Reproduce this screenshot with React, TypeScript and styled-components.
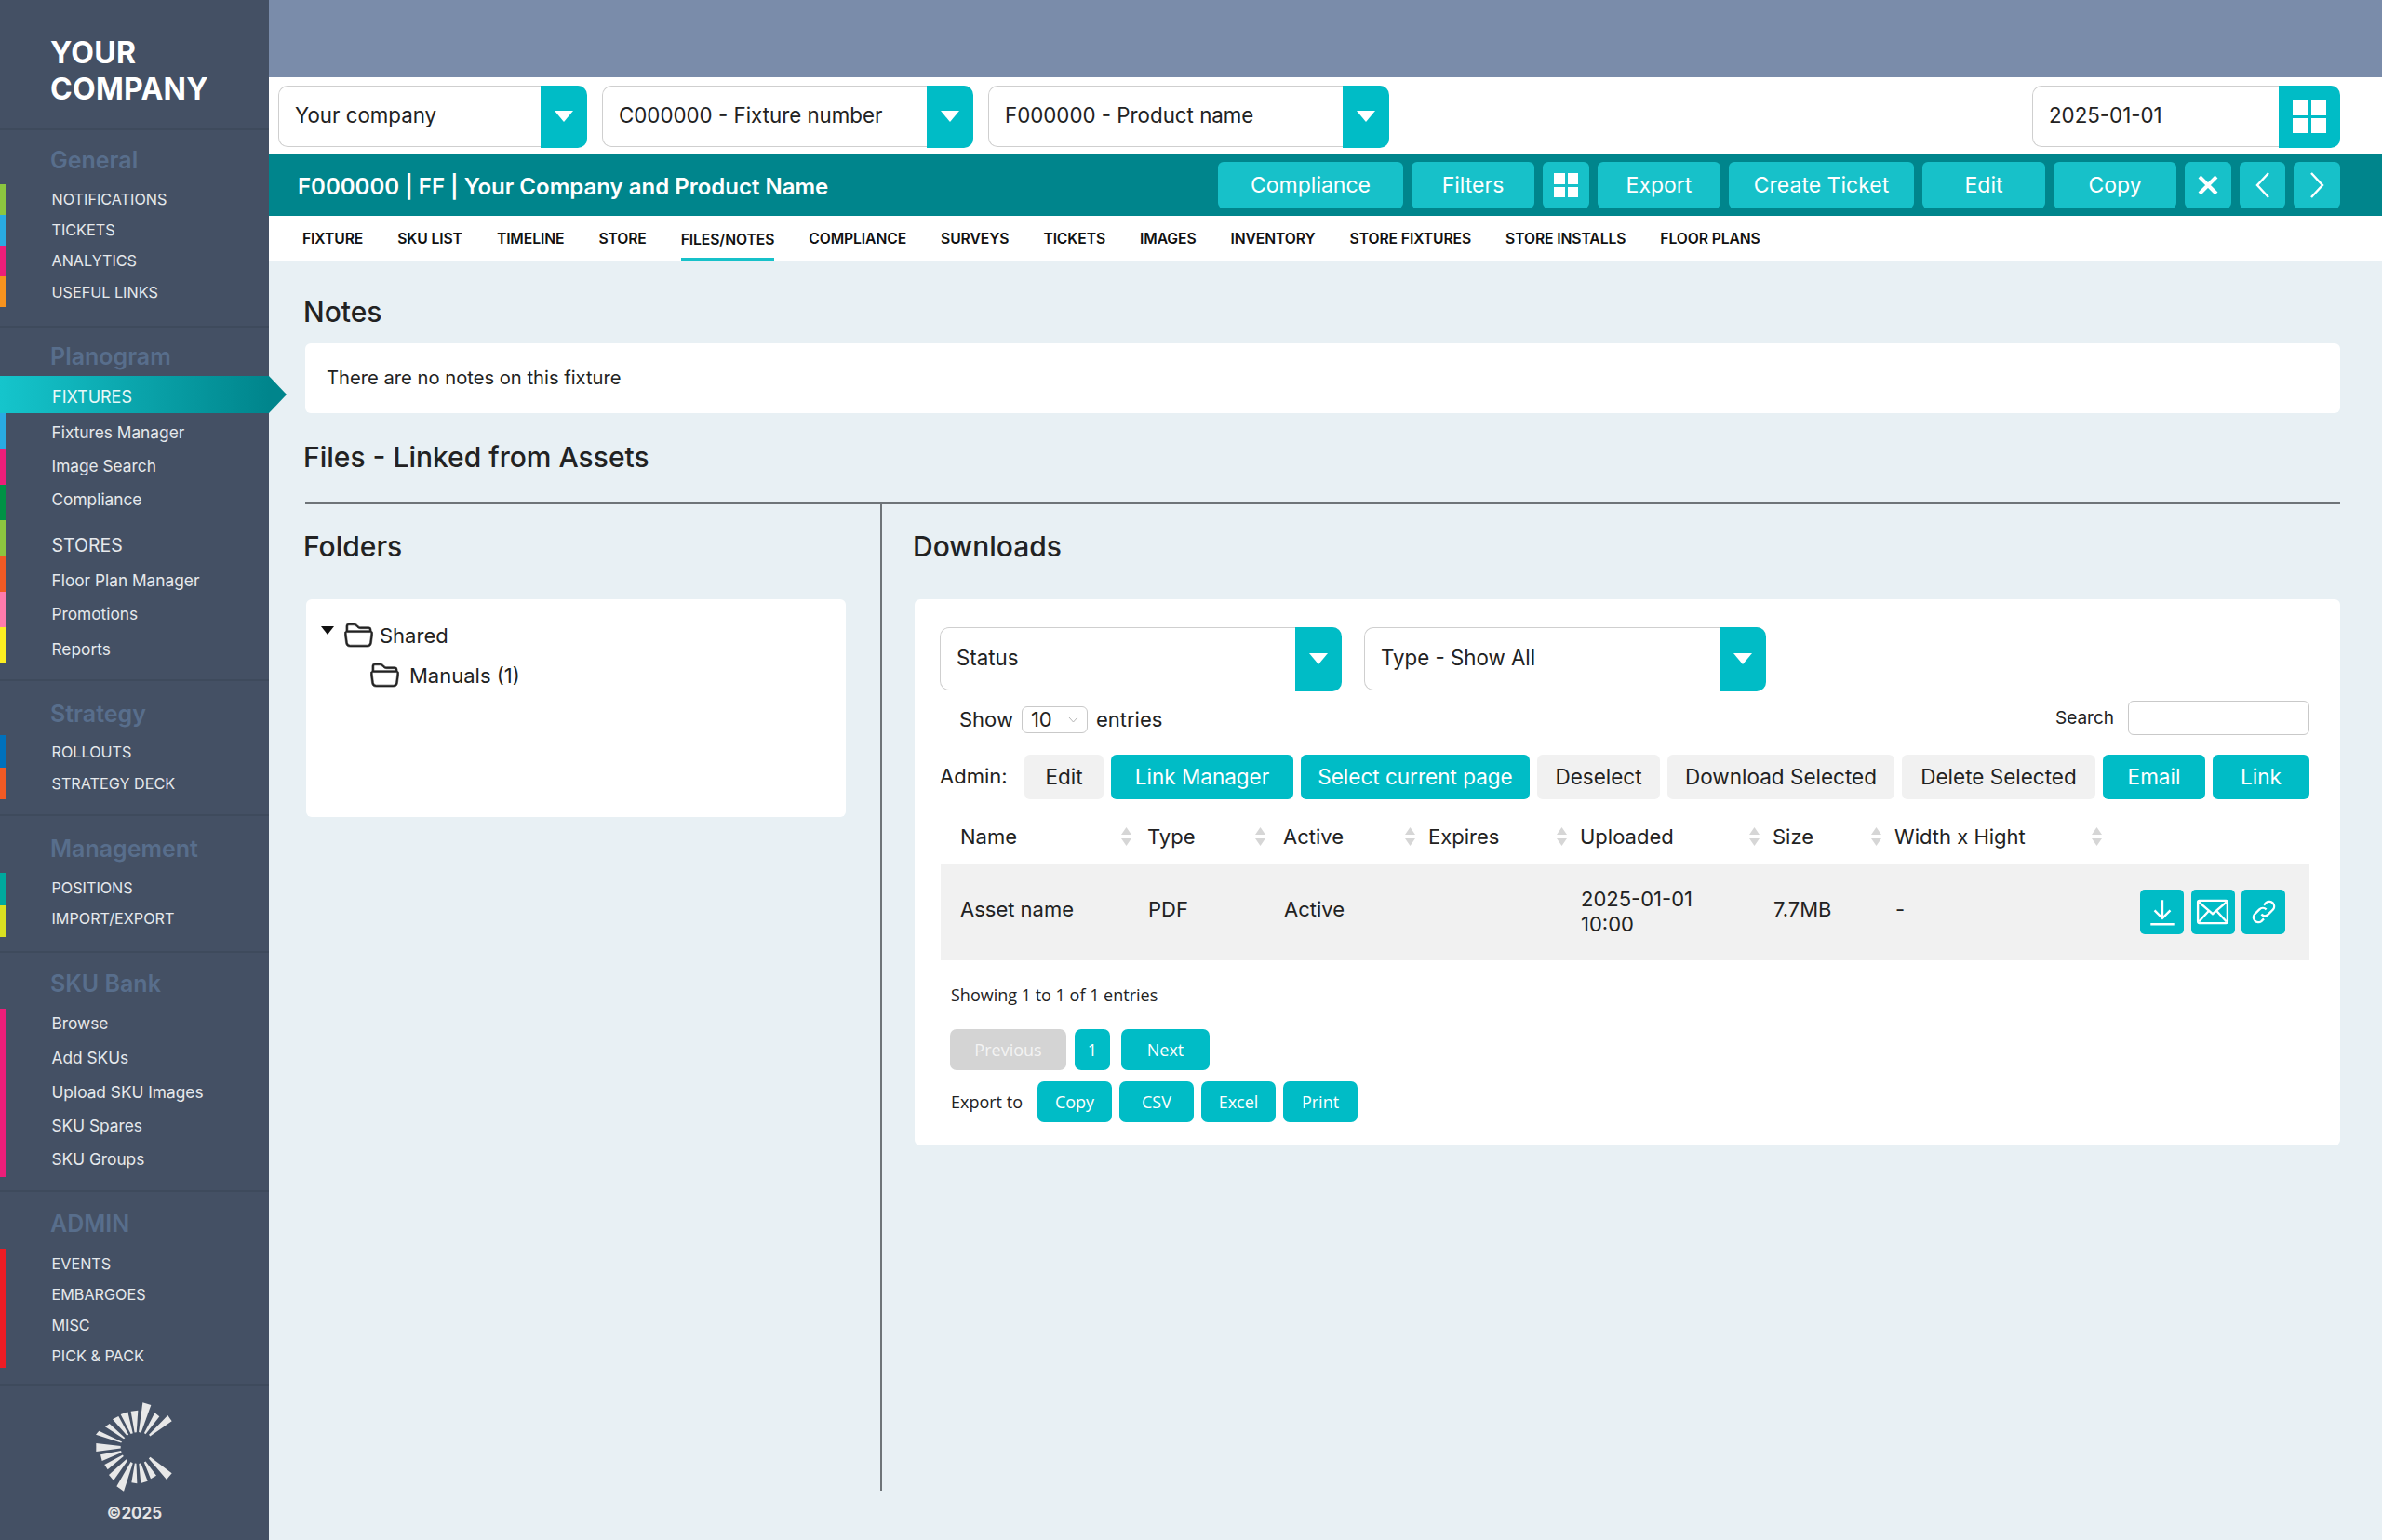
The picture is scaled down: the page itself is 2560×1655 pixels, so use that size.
import React from 'react';
import styled, { createGlobalStyle } from 'styled-components';
import { BsFolder2Open } from 'react-icons/bs';

const GlobalStyle = createGlobalStyle`
  html, body {
    margin: 0;
    padding: 0;
    background: #e8f0f4;
    font-family: Inter, "Liberation Sans", sans-serif;
    color: #222;
  }
  * {
    box-sizing: border-box;
  }
`;

const CYAN = '#00bcc6';

const Page = styled.div`
  display: grid;
  grid-template-columns: 289px 1fr;
  width: 2560px;
  height: 1655px;
  overflow: hidden;
`;

/* sidebar */
const Sidebar = styled.aside`
  position: relative;
  z-index: 2;
  background: #445064;
  display: flex;
  flex-direction: column;
`;

const Brand = styled.div`
  height: 140px;
  padding: 37px 0 0 54px;
  border-bottom: 2px solid #3e4a5c;
  color: #fff;
  font-size: 32px;
  font-weight: 700;
  line-height: 39px;
  letter-spacing: 0.3px;
`;

const Section = styled.div<{ $pt: number; $pb: number }>`
  padding: ${p => p.$pt}px 0 ${p => p.$pb}px;
  border-bottom: 2px solid #3e4a5c;
`;

const SectionTitle = styled.div<{ $mb: number }>`
  height: 40px;
  margin-bottom: ${p => p.$mb}px;
  padding-left: 54px;
  line-height: 40px;
  font-size: 25px;
  font-weight: 600;
  color: #586e8c;
`;

const NavItem = styled.a<{ $bar: string; $h: number; $dy?: number; $size: number }>`
  display: flex;
  align-items: center;
  height: ${p => p.$h}px;
  padding-left: 49.5px;
  padding-top: ${p => Math.max(p.$dy || 0, 0) * 2}px;
  padding-bottom: ${p => Math.max(-(p.$dy || 0), 0) * 2}px;
  border-left: 6.5px solid ${p => p.$bar};
  color: #e6e9ec;
  font-size: ${p => p.$size}px;
  white-space: nowrap;
`;

const ActiveNavItem = styled.a`
  position: relative;
  display: flex;
  align-items: center;
  height: 40px;
  padding: 5px 0 0 56px;
  background: linear-gradient(90deg, #15c5cc 0%, #00858c 100%);
  color: #e9f8f8;
  font-size: 18px;

  &::after {
    content: '';
    position: absolute;
    left: 100%;
    top: 0;
    border-style: solid;
    border-width: 20px 0 20px 19px;
    border-color: transparent transparent transparent #00858c;
  }
`;

const SidebarFooter = styled.div`
  display: flex;
  flex-direction: column;
  align-items: center;
  padding-top: 11px;
  color: #e4e4e4;
  font-size: 17px;
  font-weight: 700;
  line-height: 24px;
`;

const LogoMark = styled.svg`
  width: 100px;
  height: 110px;
  margin: 0 3px 4px 0;
`;

/* top area */
const Main = styled.main`
  display: flex;
  flex-direction: column;
  min-width: 0;
`;

const TopBand = styled.div`
  height: 83px;
  background: #7a8caa;
`;

const FilterBar = styled.div`
  display: flex;
  gap: 16px;
  height: 83px;
  padding: 9px 45px 0 10px;
  background: #fff;
`;

const SelectBox = styled.div<{ $w: number; $h?: number; $push?: boolean }>`
  display: flex;
  width: ${p => p.$w}px;
  height: ${p => p.$h || 66}px;
  margin-left: ${p => (p.$push ? 'auto' : '0')};
  border: 1.5px solid #cfcfcf;
  border-right: 0;
  border-radius: 10px;
  background: #fff;
`;

const SelectText = styled.span`
  flex: 1;
  padding: 0 0 3px 17px;
  align-self: center;
  font-size: 22.3px;
  color: #222;
  white-space: nowrap;
`;

const SelectButton = styled.span<{ $w?: number }>`
  display: flex;
  align-items: center;
  justify-content: center;
  width: ${p => p.$w || 50}px;
  margin: -1.5px 0;
  background: ${CYAN};
  border-radius: 0 10px 10px 0;
`;

const Caret = styled.span`
  width: 0;
  height: 0;
  border-style: solid;
  border-width: 12px 10.5px 0;
  border-color: #fff transparent transparent;
`;

const GridIcon = styled.span<{ $size: number; $gap: number }>`
  display: grid;
  grid-template-columns: 1fr 1fr;
  grid-template-rows: 1fr 1fr;
  gap: ${p => p.$gap}px;
  width: ${p => p.$size}px;
  height: ${p => p.$size}px;

  i {
    background: #fff;
  }
`;

const TitleBar = styled.div`
  display: flex;
  align-items: center;
  justify-content: space-between;
  height: 66px;
  padding: 0 45px 0 31px;
  background: #00858c;
`;

const PageTitle = styled.h1`
  margin: 2px 0 0;
  color: #fff;
  font-size: 24px;
  font-weight: 600;
`;

const TitleActions = styled.div`
  display: flex;
  gap: 9px;
`;

const TitleButton = styled.button<{ $w: number }>`
  display: flex;
  align-items: center;
  justify-content: center;
  width: ${p => p.$w}px;
  height: 50px;
  padding: 0;
  border: 0;
  border-radius: 6px;
  background: #17c1c9;
  color: #fff;
  font-family: inherit;
  font-size: 23px;
`;

const Tabs = styled.nav`
  display: flex;
  gap: 37px;
  height: 49px;
  padding-left: 36px;
  background: #fff;
`;

const Tab = styled.a<{ $active?: boolean }>`
  display: flex;
  align-items: center;
  height: 49px;
  padding-top: ${p => (p.$active ? 5 : 4)}px;
  border-bottom: 4px solid ${p => (p.$active ? '#17c1c9' : 'transparent')};
  color: #111;
  font-size: 15.7px;
  font-weight: 600;
  letter-spacing: -0.1px;
  white-space: nowrap;
`;

/* content */
const Content = styled.div`
  flex: 1;
  padding: 34px 45px 0 39px;
`;

const Heading = styled.h2<{ $mt?: number; $mb?: number }>`
  margin: ${p => p.$mt || 0}px 0 ${p => p.$mb || 0}px -2px;
  height: 40px;
  color: #222;
  font-size: 30px;
  font-weight: 500;
  line-height: 40px;
`;

const NoteCard = styled.div`
  display: flex;
  align-items: center;
  height: 75px;
  padding: 0 0 2px 23px;
  border-radius: 6px;
  background: #fff;
  font-size: 20.2px;
`;

const Split = styled.div`
  display: grid;
  grid-template-columns: 620px 1fr;
  height: 1062px;
  margin-top: 29px;
  border-top: 2px solid #6e7478;
`;

const LeftColumn = styled.section`
  padding-top: 25px;
  border-right: 2px solid #6e7478;
`;

const RightColumn = styled.section`
  padding: 25px 0 0 35px;
`;

const FolderCard = styled.div`
  width: 580px;
  height: 234px;
  margin-left: 1px;
  padding: 24px 0 0 16px;
  border-radius: 6px;
  background: #fff;
`;

const TreeRow = styled.div<{ $indent?: number }>`
  display: flex;
  align-items: center;
  height: 26px;
  margin: 0 0 17px ${p => p.$indent || 0}px;
  font-size: 22px;

  svg {
    font-size: 31px;
    flex: none;
    stroke: currentColor;
    stroke-width: 0.3;
  }
`;

const TreeCaret = styled.span`
  width: 0;
  height: 0;
  margin-right: 11px;
  margin-bottom: 8px;
  border-style: solid;
  border-width: 9px 7.5px 0;
  border-color: #111 transparent transparent;
`;

const TreeLabel = styled.span<{ $ml: number }>`
  margin-left: ${p => p.$ml}px;
  padding-top: 3px;
`;

const DownloadsCard = styled.div`
  height: 587px;
  padding: 30px 33px 0 27px;
  border-radius: 6px;
  background: #fff;
`;

const SelectRow = styled.div`
  display: flex;
  gap: 24px;
`;

const ControlsRow = styled.div`
  display: flex;
  align-items: center;
  justify-content: space-between;
  height: 37px;
  margin-top: 11px;
  padding-left: 21px;
  font-size: 22px;
`;

const ShowGroup = styled.div`
  display: flex;
  align-items: center;
  gap: 9px;
  margin-top: 3px;
`;

const PageSize = styled.span`
  display: flex;
  align-items: center;
  justify-content: space-between;
  width: 71px;
  height: 29px;
  padding: 0 9px;
  border: 1.5px solid #c9c9c9;
  border-radius: 6px;
  font-size: 22px;

  svg {
    width: 11px;
    height: 7px;
  }
`;

const SearchGroup = styled.label`
  display: flex;
  align-items: center;
  gap: 15px;
  font-size: 19px;
`;

const SearchInput = styled.input`
  width: 195px;
  height: 37px;
  border: 1.5px solid #c9c9c9;
  border-radius: 6px;
  background: #fff;
`;

const AdminRow = styled.div`
  display: flex;
  align-items: center;
  gap: 8px;
  margin-top: 21px;
`;

const AdminLabel = styled.span`
  width: 83px;
  padding-bottom: 2px;
  font-size: 22px;
`;

const AdminButton = styled.button<{ $w: number; $on?: boolean }>`
  width: ${p => p.$w}px;
  height: 48px;
  padding: 0 0 2px;
  border: 0;
  border-radius: 6px;
  background: ${p => (p.$on ? CYAN : '#f1f1f1')};
  color: ${p => (p.$on ? '#fff' : '#222')};
  font-family: inherit;
  font-size: 22.5px;
  white-space: nowrap;
`;

const Table = styled.table`
  width: calc(100% - 1px);
  margin-left: 1px;
  table-layout: fixed;
  border-collapse: collapse;
`;

const Th = styled.th<{ $w?: number; $pl?: number }>`
  width: ${p => (p.$w ? `${p.$w}px` : 'auto')};
  height: 69px;
  padding: 11px 0 0 ${p => p.$pl ?? 20}px;
  font-size: 22px;
  font-weight: 400;
  text-align: left;
`;

const ThInner = styled.div`
  display: flex;
  align-items: center;
  justify-content: space-between;
`;

const SortArrows = styled.svg<{ $mr: number }>`
  width: 11px;
  height: 20px;
  margin-right: ${p => p.$mr}px;
`;

const Row = styled.tr`
  height: 104px;
  background: #f1f1f1;
`;

const Td = styled.td<{ $raised?: boolean }>`
  padding: 0 0 ${p => (p.$raised ? 5 : 0)}px 21px;
  font-size: 22px;
  line-height: 27px;
`;

const RowActions = styled.div`
  display: flex;
  justify-content: flex-end;
  gap: 7.5px;
  padding-right: 26px;
`;

const IconButton = styled.button`
  display: flex;
  align-items: center;
  justify-content: center;
  width: 47px;
  height: 48px;
  padding: 0;
  border: 0;
  border-radius: 5px;
  background: ${CYAN};

  svg {
    width: 36px;
    height: 36px;
    fill: none;
    stroke: #fff;
    stroke-width: 2.2;
  }
`;

const FooterText = styled.div`
  margin: 25px 0 25px -16px;
  padding-left: 28px;
  font-family: "Open Sans", "Liberation Sans", sans-serif;
  font-size: 18px;
  line-height: 24px;
`;

const Pager = styled.div`
  display: flex;
  gap: 9px;
  margin-left: 11px;
`;

const PageButton = styled.button<{ $w: number; $off?: boolean; $ml?: number }>`
  width: ${p => p.$w}px;
  height: 44px;
  margin-left: ${p => p.$ml || 0}px;
  padding: 0;
  border: 0;
  border-radius: 7px;
  background: ${p => (p.$off ? '#d4d4d4' : CYAN)};
  color: ${p => (p.$off ? '#f3f3f3' : '#fff')};
  font-family: "Open Sans", "Liberation Sans", sans-serif;
  font-size: 18px;
`;

const ExportRow = styled.div`
  display: flex;
  align-items: center;
  gap: 8px;
  margin: 12px 0 0 11px;
`;

const ExportLabel = styled.span`
  width: 85px;
  margin-left: 1px;
  font-family: "Open Sans", "Liberation Sans", sans-serif;
  font-size: 18px;
`;

const CAPS = 16.2;
const SUB = 17.3;

const navSections = [
  {
    title: 'General', pt: 11.5, mb: 6, pb: 20,
    items: [
      { label: 'NOTIFICATIONS', bar: '#8cc63f', h: 33.2, size: CAPS },
      { label: 'TICKETS', bar: '#29abe2', h: 33.2, size: CAPS },
      { label: 'ANALYTICS', bar: '#ed1e79', h: 33.2, size: CAPS },
      { label: 'USEFUL LINKS', bar: '#f7931e', h: 33.2, size: CAPS },
    ],
  },
  {
    title: 'Planogram', pt: 11, mb: 1, pb: 18, active: 'FIXTURES',
    items: [
      { label: 'Fixtures Manager', bar: '#29abe2', h: 38.3, dy: 1, size: SUB },
      { label: 'Image Search', bar: '#ed1e79', h: 38.3, dy: -1, size: SUB },
      { label: 'Compliance', bar: '#009245', h: 38.3, dy: -3, size: SUB },
      { label: 'STORES', bar: '#8cc63f', h: 38.3, dy: 8, size: 19.5 },
      { label: 'Floor Plan Manager', bar: '#f15a24', h: 38.3, dy: 6.5, size: SUB },
      { label: 'Promotions', bar: '#ff7bac', h: 38.3, dy: 5, size: SUB },
      { label: 'Reports', bar: '#fcee21', h: 38.3, dy: 4, size: SUB },
    ],
  },
  {
    title: 'Strategy', pt: 14.5, mb: 3.5, pb: 16,
    items: [
      { label: 'ROLLOUTS', bar: '#0071bc', h: 34.5, size: CAPS },
      { label: 'STRATEGY DECK', bar: '#f15a24', h: 34.5, size: CAPS },
    ],
  },
  {
    title: 'Management', pt: 15, mb: 5.5, pb: 14.5,
    items: [
      { label: 'POSITIONS', bar: '#00a99d', h: 34.75, dy: -1, size: CAPS },
      { label: 'IMPORT/EXPORT', bar: '#d9e021', h: 34.75, dy: -3, size: CAPS },
    ],
  },
  {
    title: 'SKU Bank', pt: 13.5, mb: 7, pb: 14,
    items: [
      { label: 'Browse', bar: '#ed1e79', h: 36.2, dy: -2.5, size: SUB },
      { label: 'Add SKUs', bar: '#ed1e79', h: 36.2, dy: -2, size: SUB },
      { label: 'Upload SKU Images', bar: '#ed1e79', h: 36.2, dy: -1.5, size: SUB },
      { label: 'SKU Spares', bar: '#ed1e79', h: 36.2, dy: -1.5, size: SUB },
      { label: 'SKU Groups', bar: '#ed1e79', h: 36.2, dy: -1.5, size: SUB },
    ],
  },
  {
    title: 'ADMIN', pt: 14, mb: 7, pb: 17,
    items: [
      { label: 'EVENTS', bar: '#ed1c24', h: 32, size: CAPS },
      { label: 'EMBARGOES', bar: '#ed1c24', h: 32, dy: 1, size: CAPS },
      { label: 'MISC', bar: '#ed1c24', h: 32, dy: 1.5, size: CAPS },
      { label: 'PICK & PACK', bar: '#ed1c24', h: 32, dy: 2.5, size: CAPS },
    ],
  },
];

// outer edge (two points) and inner tip of each ray, in the logo's 300x330 box
const logoRays = [
  [262, 63, 275, 82, 203, 128], [220, 55, 235, 67, 188, 122], [181, 22, 208, 30, 172, 118],
  [143, 50, 166, 47, 158, 118], [110, 60, 133, 52, 146, 122], [84, 76, 103, 66, 133, 127],
  [60, 100, 74, 90, 122, 137], [30, 125, 40, 113, 113, 150], [31, 153, 31, 180, 110, 166],
  [45, 190, 50, 210, 112, 180], [58, 222, 68, 238, 118, 193], [72, 255, 87, 273, 130, 207],
  [97, 292, 120, 308, 146, 215], [145, 280, 163, 283, 158, 218], [175, 282, 197, 275, 172, 218],
  [207, 268, 225, 257, 188, 213], [258, 270, 275, 250, 203, 200],
];

const rayPoints = ([ax, ay, bx, by, tx, ty]: number[]) => {
  const dx = (bx - ax) * 0.14;
  const dy = (by - ay) * 0.14;
  return `${ax},${ay} ${bx},${by} ${tx + dx},${ty + dy} ${tx - dx},${ty - dy}`;
};

const titleButtons = [
  { label: 'Compliance', w: 199 },
  { label: 'Filters', w: 132 },
  { grid: true, w: 50 },
  { label: 'Export', w: 132 },
  { label: 'Create Ticket', w: 199 },
  { label: 'Edit', w: 132 },
  { label: 'Copy', w: 132 },
];

const tabNames = [
  'FIXTURE', 'SKU LIST', 'TIMELINE', 'STORE', 'FILES/NOTES', 'COMPLIANCE', 'SURVEYS',
  'TICKETS', 'IMAGES', 'INVENTORY', 'STORE FIXTURES', 'STORE INSTALLS', 'FLOOR PLANS',
];

const adminButtons = [
  { label: 'Edit', w: 85 },
  { label: 'Link Manager', w: 196, on: true },
  { label: 'Select current page', w: 246, on: true },
  { label: 'Deselect', w: 132 },
  { label: 'Download Selected', w: 244 },
  { label: 'Delete Selected', w: 208 },
  { label: 'Email', w: 110, on: true },
  { label: 'Link', w: 104, on: true },
];

const columns = [
  { label: 'Name', w: 202, pl: 21, sort: -3 },
  { label: 'Type', w: 146, sort: -1 },
  { label: 'Active', w: 156, sort: -6 },
  { label: 'Expires', w: 163, sort: -6 },
  { label: 'Uploaded', w: 207, sort: -6 },
  { label: 'Size', w: 131, sort: -6 },
  { label: 'Width x Hight', w: 241, sort: -2 },
];

const Sort = ({ mr }: { mr: number }) => (
  <SortArrows $mr={mr} viewBox="0 0 11 20">
    <polygon points="5.5,0 11,8 0,8" fill="#d6d6d6" />
    <polygon points="0,12 11,12 5.5,20" fill="#d6d6d6" />
  </SortArrows>
);

const SmallGrid = ({ size, gap }: { size: number; gap: number }) => (
  <GridIcon $size={size} $gap={gap}>
    <i /><i /><i /><i />
  </GridIcon>
);

const App = () => (
  <Page>
    <GlobalStyle />
    <Sidebar>
      <Brand>YOUR<br />COMPANY</Brand>
      {navSections.map(s => (
        <Section key={s.title} $pt={s.pt} $pb={s.pb}>
          <SectionTitle $mb={s.mb}>{s.title}</SectionTitle>
          {s.active && <ActiveNavItem>{s.active}</ActiveNavItem>}
          {s.items.map((it: any) => (
            <NavItem key={it.label} $bar={it.bar} $h={it.h} $dy={it.dy} $size={it.size}>
              {it.label}
            </NavItem>
          ))}
        </Section>
      ))}
      <SidebarFooter>
        <LogoMark viewBox="0 0 300 330">
          {logoRays.map(r => <polygon key={r.join()} points={rayPoints(r)} fill="#e8e8e8" />)}
        </LogoMark>
        ©2025
      </SidebarFooter>
    </Sidebar>

    <Main>
      <TopBand />
      <FilterBar>
        <SelectBox $w={332}>
          <SelectText>Your company</SelectText>
          <SelectButton><Caret /></SelectButton>
        </SelectBox>
        <SelectBox $w={399}>
          <SelectText>C000000 - Fixture number</SelectText>
          <SelectButton><Caret /></SelectButton>
        </SelectBox>
        <SelectBox $w={431}>
          <SelectText>F000000 - Product name</SelectText>
          <SelectButton><Caret /></SelectButton>
        </SelectBox>
        <SelectBox $w={331} $push>
          <SelectText>2025-01-01</SelectText>
          <SelectButton $w={66}><SmallGrid size={36} gap={3} /></SelectButton>
        </SelectBox>
      </FilterBar>

      <TitleBar>
        <PageTitle>F000000 | FF | Your Company and Product Name</PageTitle>
        <TitleActions>
          {titleButtons.map((b, i) => (
            <TitleButton key={i} $w={b.w}>
              {b.grid ? <SmallGrid size={26} gap={3} /> : b.label}
            </TitleButton>
          ))}
          <TitleButton $w={50}>
            <svg width="24" height="24" viewBox="0 0 24 24" fill="none" stroke="#fff" strokeWidth="4">
              <path d="M3 3 L21 21 M21 3 L3 21" />
            </svg>
          </TitleButton>
          <TitleButton $w={49}>
            <svg width="18" height="30" viewBox="0 0 18 30" fill="none" stroke="#fff" strokeWidth="2.4">
              <path d="M15 2 L3 15 L15 28" />
            </svg>
          </TitleButton>
          <TitleButton $w={50}>
            <svg width="18" height="30" viewBox="0 0 18 30" fill="none" stroke="#fff" strokeWidth="2.4">
              <path d="M3 2 L15 15 L3 28" />
            </svg>
          </TitleButton>
        </TitleActions>
      </TitleBar>

      <Tabs>
        {tabNames.map(t => <Tab key={t} $active={t === 'FILES/NOTES'}>{t}</Tab>)}
      </Tabs>

      <Content>
        <Heading $mb={14}>Notes</Heading>
        <NoteCard>There are no notes on this fixture</NoteCard>
        <Heading $mt={27}>Files - Linked from Assets</Heading>
        <Split>
          <LeftColumn>
            <Heading $mb={37}>Folders</Heading>
            <FolderCard>
              <TreeRow>
                <TreeCaret />
                <BsFolder2Open />
                <TreeLabel $ml={7}>Shared</TreeLabel>
              </TreeRow>
              <TreeRow $indent={53}>
                <BsFolder2Open />
                <TreeLabel $ml={11}>Manuals (1)</TreeLabel>
              </TreeRow>
            </FolderCard>
          </LeftColumn>
          <RightColumn>
            <Heading $mb={37}>Downloads</Heading>
            <DownloadsCard>
              <SelectRow>
                <SelectBox $w={432} $h={68}>
                  <SelectText>Status</SelectText>
                  <SelectButton><Caret /></SelectButton>
                </SelectBox>
                <SelectBox $w={432} $h={68}>
                  <SelectText>Type - Show All</SelectText>
                  <SelectButton><Caret /></SelectButton>
                </SelectBox>
              </SelectRow>
              <ControlsRow>
                <ShowGroup>
                  Show
                  <PageSize>
                    10
                    <svg viewBox="0 0 11 7" fill="none" stroke="#b5b5b5" strokeWidth="1">
                      <path d="M1 1 L5.5 6 L10 1" />
                    </svg>
                  </PageSize>
                  entries
                </ShowGroup>
                <SearchGroup>
                  Search
                  <SearchInput />
                </SearchGroup>
              </ControlsRow>
              <AdminRow>
                <AdminLabel>Admin:</AdminLabel>
                {adminButtons.map(b => (
                  <AdminButton key={b.label} $w={b.w} $on={b.on}>{b.label}</AdminButton>
                ))}
              </AdminRow>
              <Table>
                <thead>
                  <tr>
                    {columns.map(c => (
                      <Th key={c.label} $w={c.w} $pl={c.pl}>
                        <ThInner>
                          {c.label}
                          <Sort mr={c.sort} />
                        </ThInner>
                      </Th>
                    ))}
                    <Th />
                  </tr>
                </thead>
                <tbody>
                  <Row>
                    <Td $raised>Asset name</Td>
                    <Td $raised>PDF</Td>
                    <Td $raised>Active</Td>
                    <Td />
                    <Td>2025-01-01<br />10:00</Td>
                    <Td $raised>7.7MB</Td>
                    <Td $raised>-</Td>
                    <Td>
                      <RowActions>
                        <IconButton>
                          <svg viewBox="0 0 34 34">
                            <path d="M17 5 V23 M9 15.5 L17 23.5 L25 15.5 M5 29.5 H29" />
                          </svg>
                        </IconButton>
                        <IconButton>
                          <svg viewBox="0 0 34 34">
                            <rect x="2" y="5.5" width="30" height="23" rx="1.5" />
                            <path d="M3 7 L17 19 L31 7 M3 27 L13 16 M31 27 L21 16" />
                          </svg>
                        </IconButton>
                        <IconButton>
                          <svg viewBox="0 0 34 34">
                            <path d="M14.5 19.5 a5 5 0 0 0 7 0 l5 -5 a5 5 0 0 0 -7 -7 l-2.5 2.5" />
                            <path d="M19.5 14.5 a5 5 0 0 0 -7 0 l-5 5 a5 5 0 0 0 7 7 l2.5 -2.5" />
                          </svg>
                        </IconButton>
                      </RowActions>
                    </Td>
                  </Row>
                </tbody>
              </Table>
              <FooterText>Showing 1 to 1 of 1 entries</FooterText>
              <Pager>
                <PageButton $w={125} $off>Previous</PageButton>
                <PageButton $w={38}>1</PageButton>
                <PageButton $w={95} $ml={3}>Next</PageButton>
              </Pager>
              <ExportRow>
                <ExportLabel>Export to</ExportLabel>
                <PageButton $w={80}>Copy</PageButton>
                <PageButton $w={80}>CSV</PageButton>
                <PageButton $w={80}>Excel</PageButton>
                <PageButton $w={80}>Print</PageButton>
              </ExportRow>
            </DownloadsCard>
          </RightColumn>
        </Split>
      </Content>
    </Main>
  </Page>
);

export default App;
